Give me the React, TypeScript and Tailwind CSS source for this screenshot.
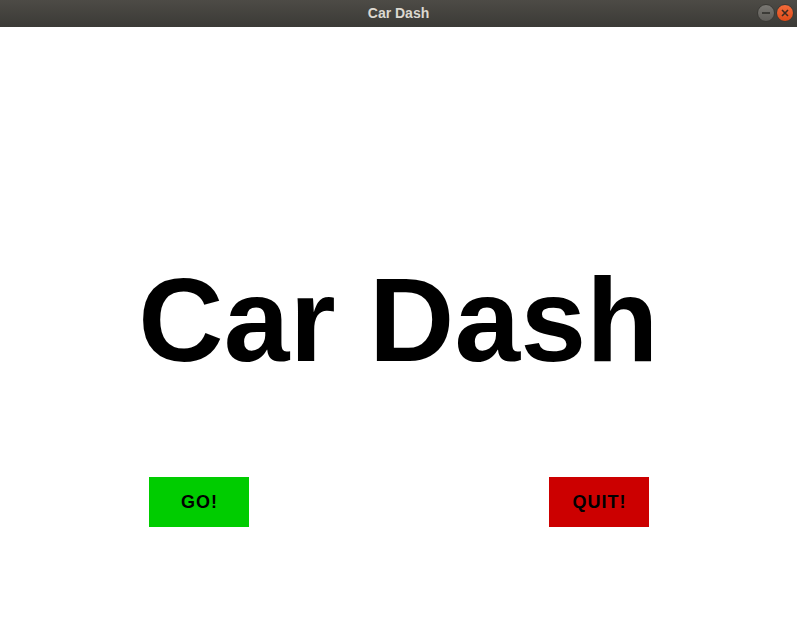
import React from "react";

const TitleBar: React.FC = () => {
  return (
    <div className="relative flex h-[27px] items-center justify-center bg-gradient-to-b from-[#4d4b46] to-[#3b3a36]">
      <span className="font-['Liberation_Sans',sans-serif] text-[14px] font-bold text-[#dcd8d0]">
        Car Dash
      </span>
      {/* Window controls */}
      <div className="absolute right-[3px] top-[4px] flex items-center gap-[1px]">
        <div className="flex h-[18px] w-[18px] items-center justify-center rounded-full border border-[#3a3935] bg-gradient-to-b from-[#7a7873] to-[#5e5c58]">
          <div className="h-[2px] w-[8px] bg-[#3c3b37]" />
        </div>
        <div className="flex h-[18px] w-[18px] items-center justify-center rounded-full border border-[#3a3935] bg-gradient-to-b from-[#f26b3a] to-[#df4a16]">
          <svg width="8" height="8" viewBox="0 0 8 8">
            <path d="M1 1 L7 7 M7 1 L1 7" stroke="#3c2a20" strokeWidth="1.6" />
          </svg>
        </div>
      </div>
    </div>
  );
};

const App: React.FC = () => {
  return (
    <div className="flex h-screen w-full flex-col bg-white font-['Liberation_Sans',sans-serif]">
      <TitleBar />

      {/* Title */}
      <h1 className="mt-[233px] text-center text-[118px] font-bold leading-[120px] tracking-[0.3px] text-black">
        Car Dash
      </h1>

      {/* Buttons */}
      <div className="mt-[97px] flex gap-[300px] pl-[149px]">
        <button className="flex h-[50px] w-[100px] items-center justify-center bg-[#00cc00] pl-[1px] text-[18px] font-bold tracking-[1px] text-black">
          GO!
        </button>
        <button className="flex h-[50px] w-[100px] items-center justify-center bg-[#cc0000] pl-[1px] text-[18px] font-bold tracking-[1px] text-black">
          QUIT!
        </button>
      </div>
    </div>
  );
};

export default App;
